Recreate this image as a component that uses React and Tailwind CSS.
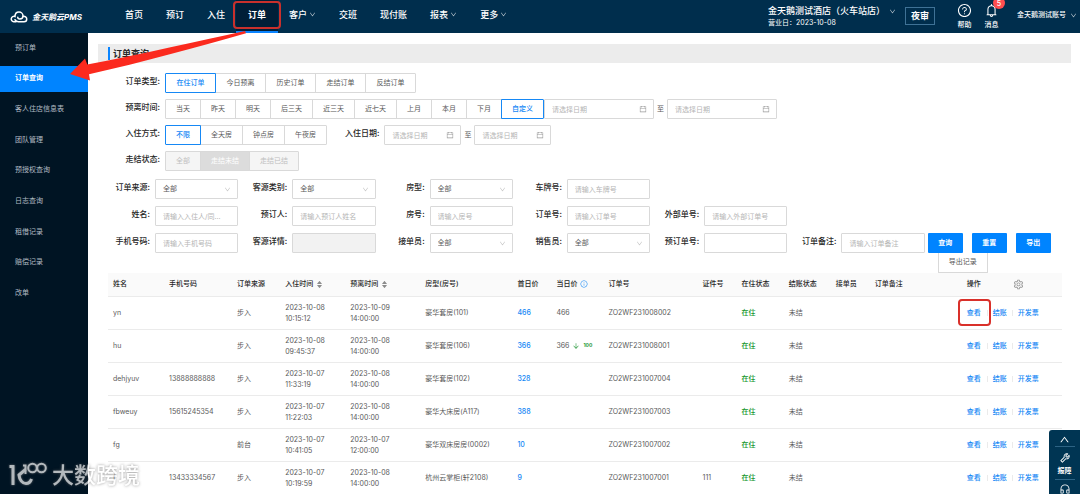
import { useState } from 'react';
import clsx from 'clsx';
import {
    AiFillCaretDown,
    AiFillCaretUp,
    AiOutlineArrowDown,
    AiOutlineBell,
    AiOutlineCalendar,
    AiOutlineCustomerService,
    AiOutlineDown,
    AiOutlineInfoCircle,
    AiOutlineQuestionCircle,
    AiOutlineSetting,
    AiOutlineTool,
    AiOutlineUp,
} from 'react-icons/ai';

const navItems = [
    { label: '首页' },
    { label: '预订' },
    { label: '入住' },
    { label: '订单', active: true },
    { label: '客户', menu: true },
    { label: '交班' },
    { label: '现付账' },
    { label: '报表', menu: true },
    { label: '更多', menu: true },
];

const sideItems = ['预订单', '订单查询', '客人住店信息表', '团队管理', '预授权查询', '日志查询', '租借记录', '赔偿记录', '改单'];

const orderTypes = ['在住订单', '今日预离', '历史订单', '走结订单', '反结订单'];
const leaveRanges = ['当天', '昨天', '明天', '后三天', '近三天', '近七天', '上月', '本月', '下月', '自定义'];
const stayModes = ['不限', '全天房', '钟点房', '午夜房'];
const walkoutStates = ['全部', '走结未结', '走结已结'];

const fields = [
    { id: 'source', label: '订单来源', type: 'select' },
    { id: 'guestType', label: '客源类别', type: 'select' },
    { id: 'roomType', label: '房型', type: 'select' },
    { id: 'plate', label: '车牌号', placeholder: '请输入车牌号' },
    { id: 'name', label: '姓名', placeholder: '请输入入住人/同...', newRow: true },
    { id: 'booker', label: '预订人', placeholder: '请输入预订人姓名' },
    { id: 'room', label: '房号', placeholder: '请输入房号' },
    { id: 'orderNo', label: '订单号', placeholder: '请输入订单号' },
    { id: 'outerNo', label: '外部单号', placeholder: '请输入外部订单号' },
    { id: 'phone', label: '手机号码', placeholder: '请输入手机号码', newRow: true },
    { id: 'guestDetail', label: '客源详情', disabled: true },
    { id: 'receiver', label: '接单员', type: 'select' },
    { id: 'seller', label: '销售员', type: 'select' },
    { id: 'bookNo', label: '预订单号' },
    { id: 'remark', label: '订单备注', placeholder: '请输入订单备注' },
];

const orders = [
    { name: 'yn', phone: '', source: '步入', inDate: '2023-10-08', inTime: '10:15:12', outDate: '2023-10-09', outTime: '14:00:00', room: '豪华套房(101)', first: '466', today: '466', no: 'ZO2WF231008002', cert: '' },
    { name: 'hu', phone: '', source: '步入', inDate: '2023-10-08', inTime: '09:45:37', outDate: '2023-10-08', outTime: '14:00:00', room: '豪华套房(106)', first: '366', today: '366', drop: '100', no: 'ZO2WF231008001', cert: '' },
    { name: 'dehjyuv', phone: '13888888888', source: '步入', inDate: '2023-10-07', inTime: '11:33:19', outDate: '2023-10-08', outTime: '14:00:00', room: '豪华套房(102)', first: '328', today: '', no: 'ZO2WF231007004', cert: '' },
    { name: 'fbweuy', phone: '15615245354', source: '步入', inDate: '2023-10-07', inTime: '11:22:03', outDate: '2023-10-08', outTime: '14:00:00', room: '豪华大床房(A117)', first: '388', today: '', no: 'ZO2WF231007003', cert: '' },
    { name: 'fg', phone: '', source: '前台', inDate: '2023-10-07', inTime: '10:41:05', outDate: '2023-10-07', outTime: '12:00:00', room: '豪华双床房房(0002)', first: '10', today: '', no: 'ZO2WF231007002', cert: '' },
    { name: 'f', phone: '13433334567', source: '步入', inDate: '2023-10-07', inTime: '10:19:59', outDate: '2023-10-08', outTime: '14:00:00', room: '杭州云掌柜(轩2108)', first: '9', today: '', no: 'ZO2WF231007001', cert: '111' },
];

const boxClass = 'block h-5 w-full rounded-[1px] border border-[#d9d9d9] px-[7px] text-[7px] text-[#595959] outline-none placeholder:text-[#b5b5b5]';

function Header() {
    return (
        <header className="flex h-[33px] shrink-0 items-center bg-[#002e4d] pr-[3px] pl-[10px] text-white">
            <a href="#" className="flex w-[115px] items-center gap-1 text-[8px] font-bold italic">
                <svg viewBox="0 0 36 24" className="h-3 w-[18px]" fill="none" stroke="currentColor" strokeWidth="3" strokeLinecap="round">
                    <path d="M12 21.5H7.5a5.5 5.5 0 1 1 2.5-10.6C10 5.5 13.500 2 18 2c4.500 0 8 3.500 8 8 0 3.500-3 6-6.500 6-2.500 0-4-1.500-4-3.300" />
                    <path d="M26 10.500c4-.8 7.500 1.800 7.500 5.500 0 3-2.500 5.500-5.500 5.500H17c-3 0-5.500-1.500-7-4" />
                </svg>
                金天鹅云PMS
            </a>
            <nav className="flex h-full gap-[23px] text-[9px] font-medium">
                {navItems.map((item) => (
                    <a
                        key={item.label}
                        href="#"
                        className={clsx(
                            'relative flex items-center gap-0.5 pb-1',
                            item.active && '-mx-3 border-b-2 border-[#0a84ff] bg-[#001f38] px-3 pt-0.5 font-bold'
                        )}
                    >
                        {item.label}
                        {item.menu && <AiOutlineDown className="size-[7px] opacity-80" />}
                        {item.active && <span className="absolute -inset-x-[3px] top-px h-7 rounded-[4px] border-2 border-[#c9302c]" />}
                    </a>
                ))}
            </nav>
            <div className="ml-auto flex h-full items-center">
                <div className="w-[137px]">
                    <div className="flex items-center gap-1 text-[9px] leading-3 font-medium whitespace-nowrap">
                        金天鹅测试酒店（火车站店）
                        <AiOutlineDown className="size-[7px] opacity-80" />
                    </div>
                    <div className="text-[7px] leading-[11px]">营业日：2023-10-08</div>
                </div>
                <button className="mb-0.5 h-[18px] w-[30px] border border-[#3f7296] text-[9px] leading-4 font-bold">夜审</button>
                <a href="#" className="ml-[22px] flex flex-col items-center pb-0.5 text-[7px] leading-[9px] font-medium">
                    <AiOutlineQuestionCircle className="mb-0.5 size-[15px]" />
                    帮助
                </a>
                <a href="#" className="relative ml-[12px] flex flex-col items-center pb-0.5 text-[7px] leading-[9px] font-medium">
                    <AiOutlineBell className="mb-0.5 size-[15px]" />
                    消息
                    <span className="absolute -top-1.5 left-[9px] flex h-3 w-3 items-center justify-center rounded-full bg-[#ff4d4f] pt-px text-[7px] leading-[7px]">5</span>
                </a>
                <a href="#" className="ml-[18px] flex items-center gap-1 pb-0.5 text-[7px] font-medium">
                    金天鹅测试账号
                    <AiOutlineDown className="size-[7px] opacity-80" />
                </a>
            </div>
        </header>
    );
}

function Sidebar() {
    return (
        <aside className="w-[88px] shrink-0 bg-[#001423] pt-0.5">
            <nav className="flex h-[271px] flex-col justify-between text-[7px] text-[#b3bcc4]">
                {sideItems.map((item, i) => (
                    <a
                        key={item}
                        href="#"
                        className={clsx('flex h-[26px] items-center pl-[15px]', i === 1 && 'bg-[#0084ff] font-bold text-white')}
                    >
                        {item}
                    </a>
                ))}
            </nav>
        </aside>
    );
}

function ButtonGroup({ items, value, onChange, wide, disabled }) {
    return (
        <div className="flex">
            {items.map((item) => (
                <button
                    key={item}
                    disabled={disabled}
                    onClick={() => onChange(item)}
                    className={clsx(
                        'relative -ml-px h-5 border px-[10px] text-[7px] first:ml-0 first:rounded-l-[1px] last:rounded-r-[1px]',
                        wide && 'min-w-[51px]',
                        disabled && 'border-[#d9d9d9]',
                        disabled && (item === value ? 'bg-[#dcdcdc] text-white' : 'bg-[#f5f5f5] text-[#bfbfbf]'),
                        !disabled && (item === value ? 'z-10 border-[#1688f5] font-medium text-[#1688f5]' : 'border-[#d9d9d9] text-[#595959]')
                    )}
                >
                    {item}
                </button>
            ))}
        </div>
    );
}

function FilterRow({ label, children }) {
    return (
        <div className="flex items-center">
            <span className="mr-[5px] w-[62px] pb-1 text-right text-[8px] font-medium text-[#262626]">{label}:</span>
            {children}
        </div>
    );
}

function DateInput({ label, wide }) {
    return (
        <label className={clsx('relative', wide ? 'w-[110px]' : 'w-[77px]')}>
            <input aria-label={label} placeholder="请选择日期" className={boxClass} />
            <AiOutlineCalendar className="absolute top-1.5 right-[7px] size-2 text-[#999]" />
        </label>
    );
}

function Field({ field }) {
    return (
        <div className={clsx('flex items-center gap-[5px]', field.newRow && 'col-start-1')}>
            <label htmlFor={field.id} className="w-[49px] shrink-0 pb-1 text-right text-[8px] font-medium text-[#262626]">
                {field.label}:
            </label>
            {field.type === 'select' ? (
                <div className="relative flex-1">
                    <select id={field.id} className={clsx(boxClass, 'appearance-none')}>
                        <option>全部</option>
                    </select>
                    <AiOutlineDown className="pointer-events-none absolute top-[7px] right-[7px] size-[7px] text-[#bfbfbf]" />
                </div>
            ) : (
                <div className="flex-1">
                    <input
                        id={field.id}
                        placeholder={field.placeholder}
                        disabled={field.disabled}
                        className={clsx(boxClass, field.disabled && 'bg-[#f2f2f2]')}
                    />
                </div>
            )}
        </div>
    );
}

function Sorter() {
    return (
        <span className="flex flex-col text-[#8c8c8c]">
            <AiFillCaretUp className="-mb-px size-[7px]" />
            <AiFillCaretDown className="-mt-0.5 size-[7px]" />
        </span>
    );
}

function OrderTable() {
    return (
        <table className="w-full table-fixed text-left text-[7px] text-[#595959]">
            <colgroup>
                <col className="w-[56px]" />
                <col className="w-[68px]" />
                <col className="w-[48px]" />
                <col className="w-[65px]" />
                <col className="w-[75px]" />
                <col className="w-[92px]" />
                <col className="w-[39px]" />
                <col className="w-[52px]" />
                <col className="w-[94px]" />
                <col className="w-[39px]" />
                <col className="w-[47px]" />
                <col className="w-[47px]" />
                <col className="w-[39px]" />
                <col className="w-[92px]" />
                <col className="w-[100px]" />
            </colgroup>
            <thead>
                <tr className="h-[23px] border-b border-[#ebebeb] bg-[#fafafa] text-[#262626] *:pl-[5px] *:font-medium">
                    <th>姓名</th>
                    <th>手机号码</th>
                    <th>订单来源</th>
                    <th><span className="flex items-center gap-[3px]">入住时间<Sorter /></span></th>
                    <th><span className="flex items-center gap-[3px]">预离时间<Sorter /></span></th>
                    <th>房型(房号)</th>
                    <th>首日价</th>
                    <th><span className="flex items-center gap-[3px]">当日价<AiOutlineInfoCircle className="size-2 text-[#1688f5]" /></span></th>
                    <th>订单号</th>
                    <th>证件号</th>
                    <th>在住状态</th>
                    <th>结账状态</th>
                    <th>接单员</th>
                    <th>订单备注</th>
                    <th>
                        <span className="flex items-center gap-8">
                            操作
                            <button aria-label="列设置"><AiOutlineSetting className="size-[11px] text-[#8c8c8c]" /></button>
                        </span>
                    </th>
                </tr>
            </thead>
            <tbody>
                {orders.map((o, i) => (
                    <tr key={o.no} className="h-[33px] border-b border-[#ebebeb] leading-[11px] *:pl-[5px]">
                        <td>{o.name}</td>
                        <td>{o.phone}</td>
                        <td>{o.source}</td>
                        <td>{o.inDate}<br />{o.inTime}</td>
                        <td>{o.outDate}<br />{o.outTime}</td>
                        <td>{o.room}</td>
                        <td className="font-medium text-[#1688f5]">{o.first}</td>
                        <td>
                            <span className="flex items-center gap-[3px]">
                                {o.today}
                                {o.drop && <AiOutlineArrowDown className="size-2 text-[#2b9a3e]" />}
                                {o.drop && <span className="text-[5px] font-bold text-[#2b9a3e]">{o.drop}</span>}
                            </span>
                        </td>
                        <td>{o.no}</td>
                        <td>{o.cert}</td>
                        <td className="font-medium text-[#14962b]">在住</td>
                        <td>未结</td>
                        <td />
                        <td />
                        <td>
                            <span className="flex items-center gap-[5px] font-medium text-[#1688f5]">
                                <a href="#" className="relative pr-px">
                                    查看
                                    {i === 0 && <span className="absolute -inset-x-[9px] -inset-y-2 rounded-[4px] border-2 border-[#d9302a]" />}
                                </a>
                                <i className="h-1.5 w-px bg-[#ebebeb]" />
                                <a href="#">结账</a>
                                <i className="h-1.5 w-px bg-[#ebebeb]" />
                                <a href="#">开发票</a>
                            </span>
                        </td>
                    </tr>
                ))}
            </tbody>
        </table>
    );
}

function SideTools() {
    return (
        <div className="fixed right-0 bottom-0 flex h-16 w-[31px] flex-col items-center overflow-hidden rounded-tl-[3px] bg-[#003553] text-white">
            <button aria-label="回到顶部" className="flex h-4 shrink-0 items-center pt-0.5"><AiOutlineUp className="size-[11px]" /></button>
            <hr className="w-5 border-[#2d6384]" />
            <button className="flex h-8 shrink-0 flex-col items-center justify-center gap-0.5 text-[7px] leading-[9px] font-bold">
                <AiOutlineTool className="size-3" />
                报障
            </button>
            <hr className="w-5 border-[#2d6384]" />
            <button aria-label="客服" className="mt-[3px] shrink-0"><AiOutlineCustomerService className="size-3" /></button>
        </div>
    );
}

function Watermark() {
    return (
        <div className="pointer-events-none fixed bottom-1.5 left-[9px] flex items-center gap-[5px] text-white opacity-70">
            <svg viewBox="0 2 38 26" className="h-[26px] w-[38px] drop-shadow-[0_0_1px_#888]" fill="none" stroke="currentColor" strokeWidth="3">
                <path d="M.5 6.500H4V25" />
                <path d="M16.500 9.500 10 15c.5 5 3.500 8.500 7 8.500 2.500 0 4.500-1.500 5.500-4.500" />
                <path d="M14 5.500h2.500V14" strokeWidth="2" />
                <circle cx="23.500" cy="8" r="4.300" strokeWidth="2" />
                <circle cx="32.500" cy="8" r="4.300" strokeWidth="2" />
            </svg>
            <span className="text-[22px] leading-[26px] font-medium [text-shadow:0_0_3px_#666]">大数跨境</span>
        </div>
    );
}

export default function App() {
    const [orderType, setOrderType] = useState('在住订单');
    const [leaveRange, setLeaveRange] = useState('自定义');
    const [stayMode, setStayMode] = useState('不限');

    return (
        <div className="relative flex h-screen flex-col overflow-hidden bg-white font-['Inter','Noto_Sans_CJK_SC',sans-serif]">
            <Header />
            <div className="flex min-h-0 flex-1">
                <Sidebar />
                <main className="min-w-0 flex-1 pt-[11px]">
                    <div className="mr-[9px] ml-[10px] flex h-[19px] items-center bg-[#ececec] pl-[10px]">
                        <h1 className="border-l-2 border-[#0a84ff] pl-[3px] text-[9px] leading-[13px] font-bold text-[#262626]">订单查询</h1>
                    </div>
                    <div className="mt-[10px] flex flex-col gap-1.5 pl-[10px] text-[7px] text-[#595959]">
                        <FilterRow label="订单类型">
                            <ButtonGroup items={orderTypes} value={orderType} onChange={setOrderType} wide />
                        </FilterRow>
                        <FilterRow label="预离时间">
                            <ButtonGroup items={leaveRanges} value={leaveRange} onChange={setLeaveRange} />
                            <DateInput label="预离开始日期" wide />
                            <span className="mx-[3px]">至</span>
                            <DateInput label="预离结束日期" wide />
                        </FilterRow>
                        <FilterRow label="入住方式">
                            <ButtonGroup items={stayModes} value={stayMode} onChange={setStayMode} />
                            <span className="mr-[5px] ml-[18px] pb-1 text-[8px] font-medium text-[#262626]">入住日期:</span>
                            <DateInput label="入住开始日期" />
                            <span className="mx-[3px]">至</span>
                            <DateInput label="入住结束日期" />
                        </FilterRow>
                        <FilterRow label="走结状态">
                            <ButtonGroup items={walkoutStates} value="走结未结" disabled />
                        </FilterRow>
                    </div>
                    <div className="mt-2 mr-[18px] ml-[13px] grid grid-cols-7 gap-y-[7px]">
                        {fields.map((field) => (
                            <Field key={field.id} field={field} />
                        ))}
                        <div className="flex gap-[9px] pl-[3px] text-[7px] font-bold text-white">
                            <button className="h-5 w-[35px] rounded-[1px] bg-[#0084ff]">查询</button>
                            <button className="h-5 w-[35px] rounded-[1px] bg-[#0084ff]">重置</button>
                            <button className="h-5 w-[35px] rounded-[1px] bg-[#0084ff]">导出</button>
                        </div>
                    </div>
                    <div className="mr-[18px] ml-[13px] grid grid-cols-7">
                        <div className="col-start-7 pl-[13px]">
                            <button className="block h-5 w-[50px] rounded-b-[1px] border border-t-0 border-[#d9d9d9] text-[7px] text-[#595959]">导出记录</button>
                        </div>
                    </div>
                    <div className="mr-[18px] ml-5">
                        <OrderTable />
                    </div>
                </main>
            </div>
            <svg viewBox="0 0 180 54" className="pointer-events-none absolute top-[30px] left-[68px] z-20 h-[54px] w-[180px]" fill="#fb2a1e">
                <path d="M177 1 178 3.200C130 17 75 32 21 44.300L22 50.500 2 44 17 28.500 19.300 34.500C75 24 130 11 177 1Z" />
            </svg>
            <SideTools />
            <Watermark />
        </div>
    );
}
